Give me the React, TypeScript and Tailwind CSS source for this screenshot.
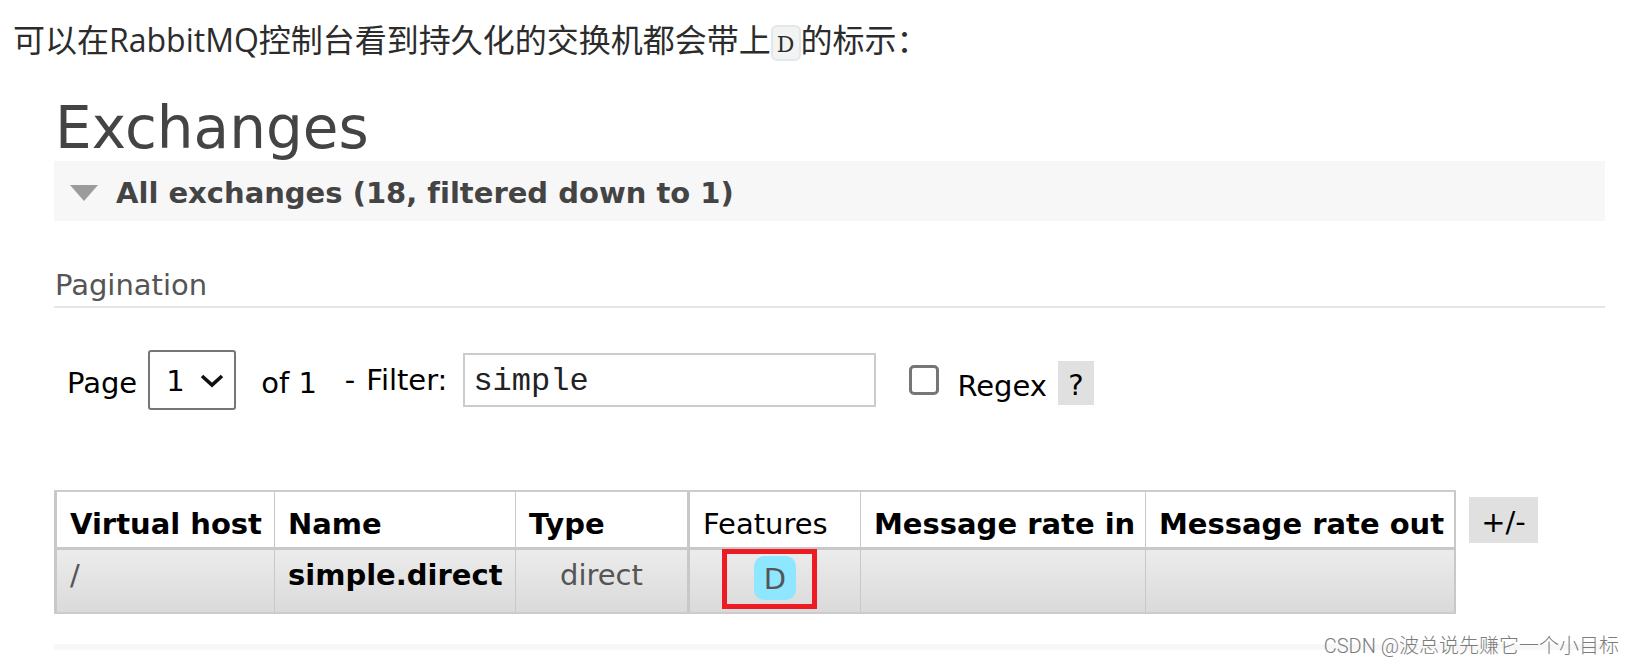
import React from "react";

const headers = [
  { label: "Virtual host", cell: "w-[221px] border-l-[3px] border-r", weight: "font-bold" },
  { label: "Name", cell: "w-[241px] border-r", weight: "font-bold" },
  { label: "Type", cell: "w-[174px] border-r-[3px]", weight: "font-bold" },
  { label: "Features", cell: "w-[171px] border-r", weight: "font-normal" },
  { label: "Message rate in", cell: "w-[285px] border-r", weight: "font-bold" },
  { label: "Message rate out", cell: "w-[310px] border-r-2", weight: "font-bold" },
];

export default function App() {
  return (
    <main className="relative min-h-screen bg-white font-['DejaVu_Sans',sans-serif] text-[29px] leading-[36px] text-black">
      <p className="px-[13px] pt-4 font-['Open_Sans','Noto_Sans_CJK_SC',sans-serif] text-[32px] leading-[48px] text-[#2c2c2c]">
        可以在RabbitMQ控制台看到持久化的交换机都会带上
        <code className="inline-block rounded-[6px] border-2 border-[#e3e6ea] bg-[#f2f3f3] px-1 pt-1 align-middle font-['DejaVu_Serif',serif] text-[22px] leading-[28px]">
          D
        </code>
        的标示：
      </p>

      <div className="pt-8 pr-[29px] pl-[54px]">
        <h1 className="pl-px text-[58px] leading-[65px] text-[#444444]">Exchanges</h1>

        <h2 className="flex h-[60px] items-center bg-[#f7f7f7] pt-1 pl-4 font-bold text-[#444444]">
          <button type="button" className="flex items-center gap-[18px] [font-variant-ligatures:none]">
            <svg width="28" height="16" viewBox="0 0 28 16" aria-hidden="true">
              <path d="M0 0h28L14 16z" fill="#9c9c9c" />
            </svg>
            All exchanges (18, filtered down to 1)
          </button>
        </h2>

        <h3 className="mt-[46px] border-b-2 border-[#e6e6e6] pb-[3px] pl-px text-[#555555]">Pagination</h3>

        <form className="mt-[42px] flex h-[60px] items-center pl-[13px]" onSubmit={(e) => e.preventDefault()}>
          <label htmlFor="page" className="pt-1.5">Page</label>
          <span className="relative ml-[11px] flex">
            <select
              id="page"
              defaultValue="1"
              className="h-[60px] w-[88px] appearance-none rounded-[3px] border-2 border-[#767676] bg-white pt-0.5 pl-4"
            >
              <option>1</option>
            </select>
            <svg
              className="pointer-events-none absolute top-6 right-3"
              width="24"
              height="14"
              viewBox="0 0 24 14"
              fill="none"
              aria-hidden="true"
            >
              <path d="M2 2l10 9 10-9" stroke="#111111" strokeWidth="3.6" />
            </svg>
          </span>
          <span className="ml-[25px] pt-1.5">of 1</span>
          <span className="ml-7">-</span>
          <label htmlFor="filter" className="ml-[11px]">Filter:</label>
          <input
            id="filter"
            type="text"
            defaultValue="simple"
            className="ml-4 h-[54px] w-[413px] border-2 border-[#cccccc] px-2 pt-0.5 font-['Liberation_Mono',monospace] text-[32px] text-[#222222]"
          />
          <input
            id="regex"
            type="checkbox"
            className="ml-[33px] size-[30px] appearance-none rounded-[5px] border-[3px] border-[#767676] bg-white"
          />
          <label htmlFor="regex" className="ml-[18px] pt-3">Regex</label>
          <button type="button" className="mt-1.5 ml-[11px] h-[44px] w-[36px] bg-[#e0e0e0] pt-1">
            ?
          </button>
        </form>

        <div className="mt-[80px] flex items-start">
          <table className="border-separate border-spacing-0 border-t-2 border-b-2 border-[#cccccc] text-left">
            <thead>
              <tr>
                {headers.map((h) => (
                  <th
                    key={h.label}
                    className={`h-[58px] border-b-[3px] border-[#c8c8c8] pt-2 pl-[13px] whitespace-nowrap ${h.cell} ${h.weight}`}
                  >
                    {h.label}
                  </th>
                ))}
              </tr>
            </thead>
            <tbody>
              <tr className="bg-linear-to-b from-[#ececec] to-[#dadada] align-top text-[#555555]">
                <td className="h-[62px] border-r border-l-[3px] border-[#c8c8c8] pt-[7px] pl-[13px]">/</td>
                <td className="border-r border-[#c8c8c8] pt-[7px] pl-[13px] font-bold">
                  <a href="#simple.direct" className="text-black">simple.direct</a>
                </td>
                <td className="border-r-[3px] border-[#c8c8c8] pt-[7px] text-center">direct</td>
                <td className="border-r border-[#c8c8c8] pt-1.5">
                  <div className="relative mx-auto h-[44px] w-[42px]">
                    <abbr title="durable" className="flex h-full items-center justify-center rounded-[10px] bg-[#8ee7ff] pt-0.5 no-underline">
                      D
                    </abbr>
                    <span className="absolute -top-[7px] -right-[21px] -bottom-[9px] -left-8 border-[5px] border-[#ed1c24]" />
                  </div>
                </td>
                <td className="border-r border-[#c8c8c8]" />
                <td className="border-r-2 border-[#c8c8c8]" />
              </tr>
            </tbody>
          </table>
          <button type="button" className="mt-[7px] ml-[13px] h-[46px] w-[69px] shrink-0 bg-[#e0e0e0] pt-1">
            +/-
          </button>
        </div>

        <div className="mt-[30px] h-[6px] bg-[#f7f7f7]" />
      </div>

      <p className="absolute right-[15px] bottom-1 font-['Roboto','Noto_Sans_CJK_SC',sans-serif] text-[20px] leading-[28px] font-light text-[#7c7c7c]">
        CSDN @波总说先赚它一个小目标
      </p>
    </main>
  );
}
